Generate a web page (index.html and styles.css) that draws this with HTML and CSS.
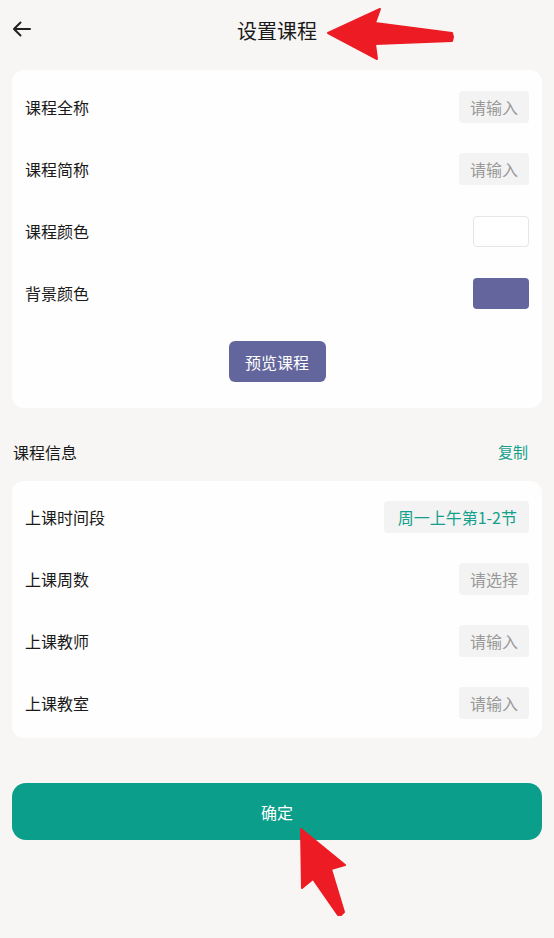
FILE: index.html
```html
<!DOCTYPE html>
<html lang="zh-CN">
<head>
    <meta charset="UTF-8">
    <meta name="viewport" content="width=device-width, initial-scale=1.0">
    <title>设置课程</title>
    <link rel="stylesheet" href="styles.css">
</head>
<body>
    <div class="page">
        <header class="topbar">
            <svg class="back" width="20" height="16" viewBox="0 0 20 16">
                <path d="M18 8H2M8.5 1.5L2 8l6.5 6.5" fill="none" stroke="#222" stroke-width="2" stroke-linecap="round" stroke-linejoin="round"/>
            </svg>
            <h1>设置课程</h1>
        </header>

        <div class="card">
            <div class="row">
                <span class="label">课程全称</span>
                <span class="pill">请输入</span>
            </div>
            <div class="row">
                <span class="label">课程简称</span>
                <span class="pill">请输入</span>
            </div>
            <div class="row">
                <span class="label">课程颜色</span>
                <span class="swatch swatch-white"></span>
            </div>
            <div class="row">
                <span class="label">背景颜色</span>
                <span class="swatch swatch-purple"></span>
            </div>
            <div class="preview-wrap">
                <button class="preview-btn">预览课程</button>
            </div>
        </div>

        <div class="section-head">
            <span>课程信息</span>
            <span class="copy">复制</span>
        </div>

        <div class="card card-info">
            <div class="row">
                <span class="label">上课时间段</span>
                <span class="pill pill-active">周一上午第1-2节</span>
            </div>
            <div class="row">
                <span class="label">上课周数</span>
                <span class="pill">请选择</span>
            </div>
            <div class="row">
                <span class="label">上课教师</span>
                <span class="pill">请输入</span>
            </div>
            <div class="row">
                <span class="label">上课教室</span>
                <span class="pill">请输入</span>
            </div>
        </div>

        <button class="submit-btn">确定</button>
    </div>

    <!-- annotation arrows drawn over the screenshot -->
    <svg class="marks" width="554" height="938" viewBox="0 0 554 938">
        <polygon points="328,33 380,9 375,23 452,33 453,37 452,41 375,44 377,59" fill="#ed1c24" stroke="#ed1c24" stroke-width="2" stroke-linejoin="round"/>
        <polygon points="301,829 345,865 331,869 344,912 341,915 338,915 313,879 302,888" fill="#ed1c24" stroke="#ed1c24" stroke-width="2" stroke-linejoin="round"/>
    </svg>
</body>
</html>
```

FILE: styles.css
```css
* {
    margin: 0;
    padding: 0;
    box-sizing: border-box;
}

body {
    font-family: "Noto Sans CJK SC", "Noto Sans", sans-serif;
    background: #f7f6f4;
    color: #1a1a1a;
    width: 554px;
    min-height: 938px;
    position: relative;
}

.page {
    padding: 0 12px;
}

.topbar {
    height: 60px;
    display: flex;
    align-items: center;
    justify-content: center;
    position: relative;
}

.back {
    position: absolute;
    left: 0;
    top: 21px;
}

.topbar h1 {
    font-size: 20px;
    font-weight: 400;
    color: #1a1a1a;
}

.card {
    margin-top: 10px;
    background: #fefefe;
    border-radius: 12px;
    padding: 6px 13px 26px;
}

.card-info {
    margin-top: 0;
    padding: 5px 13px 4px;
}

.row {
    height: 62px;
    display: flex;
    align-items: center;
    justify-content: space-between;
}

.label {
    font-size: 16px;
}

.pill {
    height: 32px;
    line-height: 32px;
    padding: 0 11px;
    background: #f3f3f3;
    border-radius: 4px;
    font-size: 16px;
    color: #999;
}

.pill-active {
    padding: 0 12px 0 14px;
    color: #12a08b;
}

.swatch {
    width: 56px;
    height: 31px;
    border-radius: 4px;
}

.swatch-white {
    background: #fff;
    border: 1px solid #e6e6e6;
}

.swatch-purple {
    background: #63659c;
}

.preview-wrap {
    display: flex;
    justify-content: center;
    margin-top: 17px;
}

.preview-btn {
    width: 97px;
    height: 41px;
    background: #63669c;
    color: #fff;
    border: none;
    border-radius: 6px;
    font-family: inherit;
    font-size: 16px;
}

.section-head {
    height: 73px;
    padding: 33px 14px 0 1px;
    display: flex;
    justify-content: space-between;
    align-items: flex-start;
    font-size: 16px;
    line-height: 22px;
}

.copy {
    color: #13a08b;
    font-size: 15px;
}

.submit-btn {
    display: block;
    width: 100%;
    height: 57px;
    margin-top: 45px;
    background: #0b9e8a;
    color: #fff;
    border: none;
    border-radius: 14px;
    font-family: inherit;
    font-size: 16px;
}

.marks {
    position: absolute;
    left: 0;
    top: 0;
    pointer-events: none;
}
```
